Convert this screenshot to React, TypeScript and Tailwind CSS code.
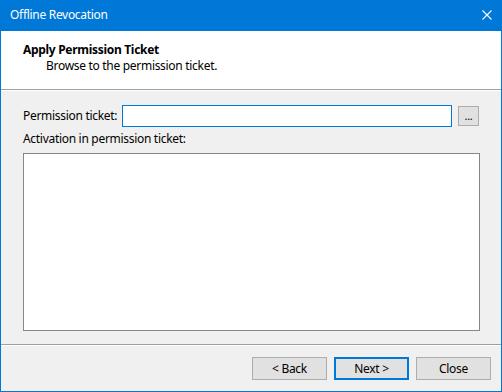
import React from "react";

const font = { fontFamily: '"Noto Sans", "Segoe UI", sans-serif' };

const Button: React.FC<{ label: string; primary?: boolean }> = ({ label, primary }) => (
  <button
    className={
      primary
        ? "w-[75px] h-[23px] bg-[#e1e1e1] border-2 border-[#0078d7] text-[12px] text-black leading-none"
        : "w-[75px] h-[23px] bg-[#e1e1e1] border border-[#adadad] text-[12px] text-black leading-none"
    }
  >
    {label}
  </button>
);

const App: React.FC = () => {
  return (
    <div className="w-[502px] h-[392px] bg-[#0078d7] flex flex-col tracking-[-0.3px]" style={font}>
      {/* title bar */}
      <div className="h-[31px] flex items-center justify-between pl-[10px] pr-[10px] text-white text-[12px]">
        <span className="-mt-px">Offline Revocation</span>
        <svg width="10" height="10" viewBox="0 0 10 10" className="-mt-px">
          <path d="M0.5 0.5L9.5 9.5M9.5 0.5L0.5 9.5" stroke="white" strokeWidth="1.1" />
        </svg>
      </div>

      {/* body */}
      <div className="flex-1 mx-px mb-px bg-[#f0f0f0] flex flex-col text-[12px] text-black">
        <div className="h-[58px] bg-white pl-[22px] pt-[11px] leading-[16px]">
          <div className="font-bold">Apply Permission Ticket</div>
          <div className="pl-[23px]">Browse to the permission ticket.</div>
        </div>
        <div className="h-px bg-[#a0a0a0]" />
        <div className="h-px bg-white" />

        <div className="flex-1 px-[22px] flex flex-col">
          <div className="mt-[14px] flex items-center h-[22px]">
            <span className="w-[99px] shrink-0 whitespace-nowrap">Permission ticket:</span>
            <div className="w-[330px] h-[22px] bg-white border border-[#0078d7]" />
            <button className="ml-[6px] w-[21px] h-[20px] bg-[#e1e1e1] border border-[#adadad] text-[11px] leading-none pb-[2px]">
              ...
            </button>
          </div>
          <div className="mt-[4px] leading-[16px] whitespace-nowrap">Activation in permission ticket:</div>
          <div className="mt-[6px] w-[457px] h-[178px] bg-white border border-[#828790]" />
        </div>

        <div className="h-px bg-[#a0a0a0]" />
        <div className="h-px bg-white" />
        <div className="h-[45px] flex justify-end items-start pt-[11px] pr-[10px] gap-[7px]">
          <Button label="< Back" />
          <Button label="Next >" primary />
          <Button label="Close" />
        </div>
      </div>
    </div>
  );
};

export default App;
